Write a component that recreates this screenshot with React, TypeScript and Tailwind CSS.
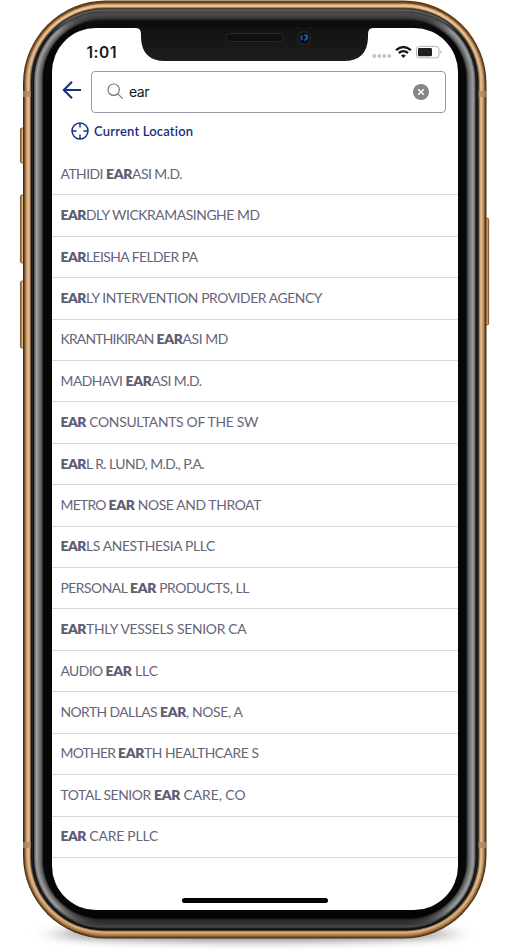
import { useLayoutEffect, useRef } from "react";

type Segment = { text: string; width: number; bold?: boolean };

// Start and end of the highlighted match, then the end of the row's text.
const results: { pre: string; post: string; from: number; to: number; end: number }[] = [
  { pre: "ATHIDI ", post: "ASI M.D.", from: 45.5, to: 71.5, end: 121.5 },
  { pre: "", post: "DLY WICKRAMASINGHE MD", from: 0, to: 25.5, end: 199 },
  { pre: "", post: "LEISHA FELDER PA", from: 0, to: 25.5, end: 137 },
  { pre: "", post: "LY INTERVENTION PROVIDER AGENCY", from: 0, to: 25.5, end: 261.5 },
  { pre: "KRANTHIKIRAN ", post: "ASI MD", from: 96, to: 122, end: 167.5 },
  { pre: "MADHAVI ", post: "ASI M.D.", from: 65, to: 91, end: 141 },
  { pre: "", post: " CONSULTANTS OF THE SW", from: 0, to: 25.5, end: 197.5 },
  { pre: "", post: "L R. LUND, M.D., P.A.", from: 0, to: 25.5, end: 143.5 },
  { pre: "METRO ", post: " NOSE AND THROAT", from: 48, to: 74, end: 200.5 },
  { pre: "", post: "LS ANESTHESIA PLLC", from: 0, to: 25.5, end: 154.5 },
  { pre: "PERSONAL ", post: " PRODUCTS, LL", from: 69.5, to: 95.5, end: 188.5 },
  { pre: "", post: "THLY VESSELS SENIOR CA", from: 0, to: 25.5, end: 186 },
  { pre: "AUDIO ", post: " LLC", from: 45, to: 71, end: 97.5 },
  { pre: "NORTH DALLAS ", post: ", NOSE, A", from: 99.5, to: 125.5, end: 182 },
  { pre: "MOTHER ", post: "TH HEALTHCARE S", from: 57.5, to: 83.5, end: 198 },
  { pre: "TOTAL SENIOR ", post: " CARE, CO", from: 93.5, to: 119.5, end: 185 },
  { pre: "", post: " CARE PLLC", from: 0, to: 25.5, end: 97.5 },
];

// Tracks the letters so that the text fills the given width.
function FitText({ text, width, bold }: Segment) {
  const ref = useRef<HTMLSpanElement>(null);
  useLayoutEffect(() => {
    const el = ref.current;
    if (!el || !text) return;
    el.style.letterSpacing = "0px";
    const natural = el.getBoundingClientRect().width;
    el.style.letterSpacing = `${(width - natural) / text.length}px`;
  }, [text, width]);
  if (!text) return null;
  return (
    <span ref={ref} className={bold ? "whitespace-pre font-extrabold text-[#5f5c74]" : "whitespace-pre"}>
      {text}
    </span>
  );
}

// Rings of the phone body, from the outer edge inwards: inset, side, top and bottom colours.
const rings: [number, string, string, string][] = [
  [0, "#4a2b12", "#5d3510", "#4b2a10"],
  [1, "#6f4a2a", "#6b4218", "#6d4824"],
  [2, "#a0764a", "#75501f", "#94683a"],
  [3, "#c3976a", "#bd9160", "#ae8050"],
  [4, "#dab183", "#e4bb89", "#c2925e"],
  [5, "#e3bd91", "#f0cc9f", "#d8ab78"],
  [6, "#cba77e", "#d9b183", "#d8ae80"],
  [7, "#77583a", "#77583a", "#8a6540"],
  [8, "#17181a", "#29292a", "#08090a"],
  [9, "#202326", "#6b6b6b", "#111314"],
  [10, "#0b0c0d", "#505050", "#25282a"],
  [11, "#5a5c5e", "#3c3c3c", "#4b4c4d"],
  [12, "#868686", "#484848", "#414141"],
  [13, "#9c9c9c", "#4d4d4d", "#3c3c3c"],
  [14, "#939393", "#484848", "#363636"],
  [15, "#848484", "#444444", "#303030"],
  [16, "#757575", "#404040", "#2b2b2b"],
  [17, "#676767", "#383838", "#242424"],
  [18, "#545454", "#303030", "#1c1c1c"],
  [19, "#333333", "#151515", "#121212"],
  [20, "#070707", "#101010", "#000000"],
];

function PhoneBody() {
  return (
    <svg className="absolute inset-0" width="508" height="949" viewBox="0 0 508 949" aria-hidden="true">
      <defs>
        <filter id="soft" x="-20%" y="-200%" width="140%" height="500%">
          <feGaussianBlur stdDeviation="14 5" />
        </filter>
        <linearGradient id="key" x1="0" x2="1" y1="0" y2="0">
          <stop offset="0" stopColor="#684520" />
          <stop offset="0.4" stopColor="#e0b985" />
          <stop offset="0.75" stopColor="#c79b68" />
          <stop offset="1" stopColor="#70491f" />
        </linearGradient>
        {rings.map(([inset, side, top, bottom]) => (
          <linearGradient key={inset} id={`ring${inset}`} gradientUnits="userSpaceOnUse" x1="0" x2="0" y1="0" y2="949">
            <stop offset={inset > 8 ? 0.021 : 0.012} stopColor={top} />
            <stop offset={inset > 8 ? 0.035 : 0.07} stopColor={side} />
            <stop offset={inset > 8 ? 0.955 : 0.92} stopColor={side} />
            <stop offset={inset > 8 ? 0.973 : 0.98} stopColor={bottom} />
          </linearGradient>
        ))}
      </defs>
      <ellipse cx="254" cy="934" rx="200" ry="7" fill="#000" opacity="0.5" filter="url(#soft)" />
      <rect x="20.4" y="128" width="5" height="35" rx="1.5" fill="url(#key)" stroke="#6b4720" strokeWidth="0.7" />
      <rect x="20.4" y="195" width="5" height="68" rx="1.5" fill="url(#key)" stroke="#6b4720" strokeWidth="0.7" />
      <rect x="20.4" y="281" width="5" height="67" rx="1.5" fill="url(#key)" stroke="#6b4720" strokeWidth="0.7" />
      <rect x="484.2" y="218" width="4.5" height="107" rx="1.5" fill="url(#key)" stroke="#6b4720" strokeWidth="0.7" />
      {rings.map(([inset]) => (
        <rect
          key={inset}
          x={23 + inset}
          y={0.5 + inset}
          width={463.5 - inset * 2}
          height={938 - inset * 2}
          rx={83 - inset * 1.25}
          fill={`url(#ring${inset})`}
        />
      ))}
      <g fill="#a58a6e" opacity="0.8">
        <rect x="23" y="91" width="8" height="6" />
        <rect x="478.5" y="91" width="8" height="6" />
        <rect x="23" y="842" width="8" height="6" />
        <rect x="478.5" y="842" width="8" height="6" />
      </g>
    </svg>
  );
}

function Notch() {
  return (
    <svg className="absolute left-[134px] top-[27px]" width="242" height="36" viewBox="134 27 242 36" aria-hidden="true">
      <defs>
        <linearGradient id="notch" x1="0" x2="0" y1="0" y2="1">
          <stop offset="0" stopColor="#121212" />
          <stop offset="1" stopColor="#1d1d1d" />
        </linearGradient>
      </defs>
      <path d="M134 27V28H136Q141 28 141 34V38Q142 61 165 61H344Q367 61 368 38V34Q368 28 373 28H376V27Z" fill="url(#notch)" />
      <rect x="225.5" y="33.5" width="58" height="8" rx="4" fill="#101010" stroke="#292929" />
      <circle cx="304" cy="38" r="7.3" fill="#222" />
      <circle cx="304" cy="38" r="5.5" fill="#080b12" />
      <path d="M302.6 35.2Q300 37.5 302.3 40" fill="none" stroke="#1b5088" strokeWidth="2.2" />
      <path d="M304.5 35Q308 35.5 307 38.5L304.5 40.5" fill="none" stroke="#1f66ad" strokeWidth="2" />
    </svg>
  );
}

function StatusIcons() {
  return (
    <svg width="76" height="16" viewBox="371 44 76 16" aria-hidden="true">
      <g fill="#c5c5c5">
        <circle cx="374.3" cy="56" r="1.9" />
        <circle cx="379.3" cy="56" r="1.9" />
        <circle cx="384.3" cy="56" r="1.9" />
        <circle cx="389.3" cy="56" r="1.9" />
      </g>
      <g fill="none" stroke="#171717" strokeWidth="2.3">
        <path d="M396 50.2Q403.4 43.7 410.9 50.2" />
        <path d="M398.8 53Q403.4 49.2 408 53" />
      </g>
      <path d="M401 55.4Q403.4 53.6 405.8 55.4L403.4 58Z" fill="#171717" />
      <rect x="416.5" y="46.4" width="22.5" height="11.5" rx="3" fill="#fff" stroke="#b4b4b4" />
      <rect x="418" y="48" width="14" height="8.3" rx="1.4" fill="#202020" />
      <path d="M440.5 50.2Q443 52.2 440.5 54.2Z" fill="#b4b4b4" />
    </svg>
  );
}

export default function App() {
  return (
    <div className="relative h-[949px] w-[508px] overflow-hidden bg-white pl-[51.5px] pt-[28px] font-['Lato','Liberation_Sans',sans-serif]">
      <PhoneBody />
      <main className="relative flex h-[882px] w-[406px] flex-col overflow-hidden rounded-[44px] bg-white">
        <header className="flex h-[43px] items-start justify-between pl-[35px] pr-[11px] pt-4">
          <span className="font-['Inter',sans-serif] text-[15.5px] font-semibold leading-[17px] text-[#171717]">
            <FitText text="1:01" width={30.5} />
          </span>
          <StatusIcons />
        </header>
        <div className="flex h-[41px] items-center pl-[10.5px]">
          <svg className="mt-[-4px] shrink-0" width="20" height="20" viewBox="0 0 20 20" fill="none" stroke="#182f83" strokeWidth="2.1" aria-label="Back">
            <path d="M19 10H2M10 1.8L1.8 10L10 18.2" />
          </svg>
          <div className="ml-[9px] flex h-[42px] w-[355px] shrink-0 items-center rounded-[4px] border-[1.5px] border-[#9998a5] pl-[15px] pr-4">
            <svg width="17" height="17" viewBox="0 0 17 17" fill="none" stroke="#777" strokeWidth="1.2" aria-hidden="true">
              <circle cx="6.7" cy="6.7" r="5.7" />
              <path d="M10.8 10.8L15.7 15.7" />
            </svg>
            <span className="ml-[5px] grow font-['Inter',sans-serif] text-[14px] leading-5 text-[#171717]">
              <FitText text="ear" width={20} />
            </span>
            <svg width="16" height="16" viewBox="0 0 16 16" aria-label="Clear">
              <circle cx="8" cy="8" r="8" fill="#858585" />
              <path d="M5.2 5.2L10.8 10.8M10.8 5.2L5.2 10.8" stroke="#fff" strokeWidth="1.6" />
            </svg>
          </div>
        </div>
        <div className="flex h-[42px] items-start pl-[19.5px] pt-[10px]">
          <svg width="18" height="18" viewBox="0 0 18 18" fill="none" stroke="#182f83" strokeWidth="1.5" aria-hidden="true">
            <circle cx="9" cy="9" r="8" />
            <path d="M9 1V5.5M9 12.5V17M1 9H5.5M12.5 9H17" />
          </svg>
          <span className="ml-[5px] pt-px text-[13px] font-semibold leading-4 text-[#182f83]">
            <FitText text="Current Location" width={99.5} />
          </span>
        </div>
        <ul>
          {results.map((row) => (
            <li key={row.pre + row.post} className="flex h-[41.42px] items-center border-b-[1.5px] border-[#dadada] pb-px pl-[9px] text-[13.9px] leading-5 text-[#676479]">
              <FitText text={row.pre} width={row.from} />
              <FitText text="EAR" width={row.to - row.from} bold />
              <FitText text={row.post} width={row.end - row.to} />
            </li>
          ))}
        </ul>
        <div className="mx-auto mb-[7px] mt-auto h-[5px] w-[146px] rounded-full bg-black" />
      </main>
      <Notch />
    </div>
  );
}
